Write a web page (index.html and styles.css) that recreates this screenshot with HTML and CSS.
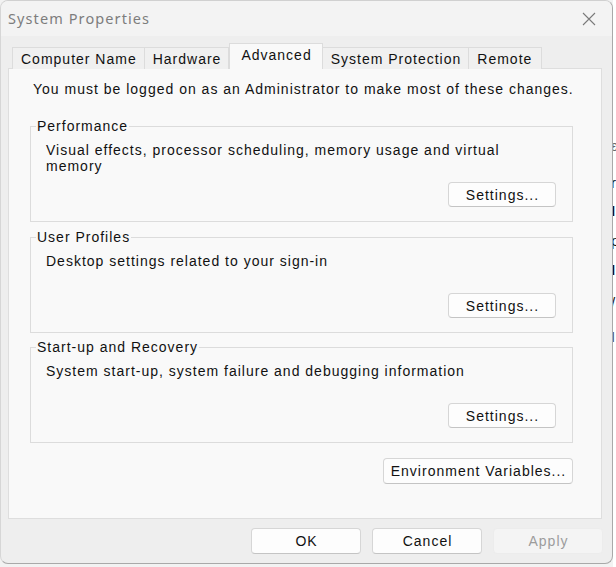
FILE: index.html
```html
<!DOCTYPE html>
<html>
<head>
<meta charset="utf-8">
<link rel="stylesheet" href="styles.css">
</head>
<body>
<div class="desktop">
  <div class="window">
    <div class="titlebar">
      <span class="title">System Properties</span>
      <svg class="close" width="14" height="14" viewBox="0 0 14 14"><path d="M1 1 L13 13 M13 1 L1 13" stroke="#7a7a7a" stroke-width="1.1" fill="none"/></svg>
    </div>
    <div class="content">
      <div class="tabs">
        <div class="tab">Computer Name</div>
        <div class="tab">Hardware</div>
        <div class="tab active">Advanced</div>
        <div class="tab">System Protection</div>
        <div class="tab">Remote</div>
      </div>
      <div class="panel">
        <p class="notice">You must be logged on as an Administrator to make most of these changes.</p>
        <fieldset class="group first">
          <legend>Performance</legend>
          <div class="group-body">
            <p class="desc">Visual effects, processor scheduling, memory usage and virtual<br>memory</p>
            <button class="btn settings">Settings...</button>
          </div>
        </fieldset>
        <fieldset class="group">
          <legend>User Profiles</legend>
          <div class="group-body">
            <p class="desc">Desktop settings related to your sign-in</p>
            <button class="btn settings">Settings...</button>
          </div>
        </fieldset>
        <fieldset class="group last">
          <legend>Start-up and Recovery</legend>
          <div class="group-body">
            <p class="desc">System start-up, system failure and debugging information</p>
            <button class="btn settings">Settings...</button>
          </div>
        </fieldset>
        <button class="btn env">Environment Variables...</button>
      </div>
      <div class="footer">
        <button class="btn dlg">OK</button>
        <button class="btn dlg">Cancel</button>
        <button class="btn dlg disabled" disabled>Apply</button>
      </div>
    </div>
  </div>
  <div class="behind">
    <span class="frag f1">ɛ</span>
    <span class="frag f2">r</span>
    <span class="frag f3">I</span>
    <span class="frag f4">p</span>
    <span class="frag f5">I</span>
    <span class="frag f6">/</span>
    <span class="frag f7">I</span>
  </div>
</div>
</body>
</html>
```

FILE: styles.css
```css
html, body {
  margin: 0;
  padding: 0;
}
body {
  background: #f2f2f2;
  font-family: "Liberation Sans", Arial, sans-serif;
  font-size: 14px;
  letter-spacing: 1px;
  color: #111;
}
.desktop {
  display: flex;
  width: 616px;
  height: 567px;
  overflow: hidden;
  align-items: flex-start;
}
.window {
  width: 613px;
  height: 564px;
  flex: 0 0 613px;
  box-sizing: border-box;
  border: 1px solid #a9a9a9;
  border-left-color: #d6d6d6;
  border-top-color: #d0d0d0;
  border-radius: 8px;
  background: #eeeeee;
  display: flex;
  flex-direction: column;
  overflow: hidden;
  position: relative;
  z-index: 1;
}
.titlebar {
  height: 35px;
  flex: 0 0 35px;
  display: flex;
  align-items: center;
  justify-content: space-between;
  padding: 0 16px 0 7px;
  background: #f3f3f3;
}
.title {
  font-family: "Noto Sans", "Open Sans", sans-serif;
  font-size: 14.5px;
  letter-spacing: 1.1px;
  color: #7d7d7d;
  margin-top: -1px;
}
.close {
  display: block;
}
.content {
  flex: 1;
  display: flex;
  flex-direction: column;
  padding: 7px 9px 0 7px;
}
.tabs {
  display: flex;
  align-items: flex-end;
  padding-left: 4px;
  height: 26px;
  margin-bottom: -1px;
  position: relative;
  z-index: 2;
}
.tab {
  height: 22px;
  line-height: 23px;
  padding: 0 7px 0 8px;
  box-sizing: border-box;
  border: 1px solid #dcdcdc;
  border-bottom: none;
  background: #f0f0f0;
  white-space: nowrap;
}
.tab + .tab {
  border-left: none;
}
.tab:last-child {
  padding-right: 9px;
}
.tab.active {
  height: 26px;
  line-height: 22px;
  background: #f9f9f9;
  padding: 0 10px 0 11px;
  border-left: 1px solid #dcdcdc;
}
.tab.active + .tab {
  border-left: none;
}
.panel {
  height: 451px;
  box-sizing: border-box;
  border: 1px solid #dedede;
  background: #f9f9f9;
  padding: 12px 28px 0 21px;
  display: flex;
  flex-direction: column;
  margin-right: 1px;
}
.notice {
  margin: 0 -10px 0 3px;
  line-height: 16px;
  white-space: nowrap;
}
.group {
  margin: 7px 0 0;
  padding: 8px 16px 14px 15px;
  border: 1px solid #dcdcdc;
  min-width: 0;
}
.group.first {
  margin-top: 21px;
}
.group.last {
  margin-top: 6px;
}
.group legend {
  margin-left: -10px;
  padding: 0 1px;
  line-height: 16px;
}
.group-body {
  height: 65px;
  display: flex;
  flex-direction: column;
}
.desc {
  margin: 0;
  line-height: 16px;
  white-space: nowrap;
}
.btn {
  font-family: "Liberation Sans", Arial, sans-serif;
  font-size: 14px;
  letter-spacing: 1px;
  color: #111;
  background: #fdfdfd;
  border: 1px solid #d6d6d6;
  border-bottom-color: #c4c4c4;
  border-radius: 4px;
  padding: 0 0 0 1px;
  box-sizing: border-box;
  cursor: default;
}
.settings {
  margin-top: auto;
  align-self: flex-end;
  width: 108px;
  height: 25px;
}
.env {
  margin-top: 15px;
  align-self: flex-end;
  width: 190px;
  height: 26px;
  margin-right: 0;
}
.footer {
  display: flex;
  justify-content: flex-end;
  gap: 11px;
  margin-top: 9px;
}
.dlg {
  width: 110px;
  height: 26px;
}
.dlg.disabled {
  background: #f4f4f4;
  border-color: #ececec;
  color: #9c9c9c;
}
.behind {
  flex: 1;
  height: 567px;
  background: #ffffff;
  position: relative;
  overflow: hidden;
  font-family: "Liberation Sans", Arial, sans-serif;
  font-size: 15px;
  letter-spacing: 0;
  color: #111;
}
.frag {
  position: absolute;
  left: -2px;
  line-height: 16px;
}
.f1 { top: 138px; color: #666; }
.f2 { top: 175px; }
.f3 { top: 203px; font-weight: bold; }
.f4 { top: 233px; }
.f5 { top: 262px; font-weight: bold; }
.f6 { top: 295px; }
.f7 { top: 329px; color: #555; }
```
